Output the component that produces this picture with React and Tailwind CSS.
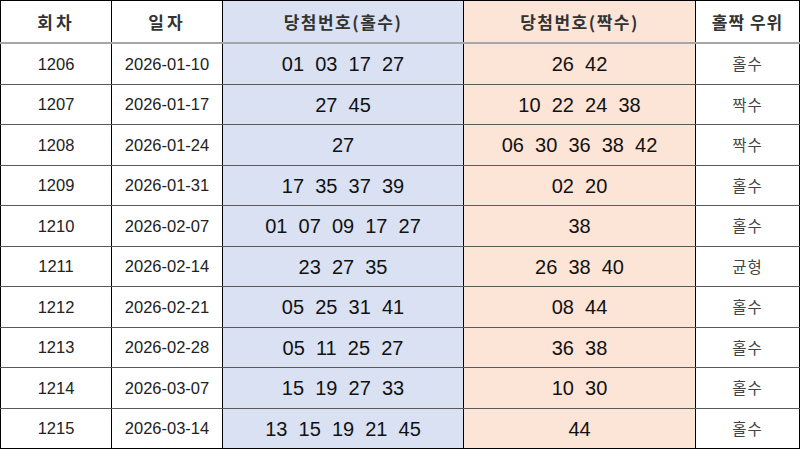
import React from "react";

const rows = [
  ["1206", "2026-01-10", "01  03  17  27", "26  42", "홀수"],
  ["1207", "2026-01-17", "27  45", "10  22  24  38", "짝수"],
  ["1208", "2026-01-24", "27", "06  30  36  38  42", "짝수"],
  ["1209", "2026-01-31", "17  35  37  39", "02  20", "홀수"],
  ["1210", "2026-02-07", "01  07  09  17  27", "38", "홀수"],
  ["1211", "2026-02-14", "23  27  35", "26  38  40", "균형"],
  ["1212", "2026-02-21", "05  25  31  41", "08  44", "홀수"],
  ["1213", "2026-02-28", "05  11  25  27", "36  38", "홀수"],
  ["1214", "2026-03-07", "15  19  27  33", "10  30", "홀수"],
  ["1215", "2026-03-14", "13  15  19  21  45", "44", "홀수"],
];

const head = "flex items-center justify-center border-r border-black text-[17px] font-bold text-[#333] font-['Noto_Sans_CJK_KR','Noto_Sans',sans-serif]";
const cell = "flex items-center justify-center border-r border-black font-['Liberation_Sans','Noto_Sans_CJK_KR',sans-serif]";

export default function App() {
  return (
    <div className="w-[800px] h-[450px] bg-white overflow-hidden text-black">
      <div className="grid grid-cols-[112px_111px_241px_232px_104px] h-[44px] border-t border-black border-b-2 border-b-[#a6a6a6]">
        <div className={head + " border-l tracking-[3px]"}>회차</div>
        <div className={head + " tracking-[3px]"}>일자</div>
        <div className={head + " bg-[#d9e1f2] tracking-[1.5px]"}>당첨번호(홀수)</div>
        <div className={head + " bg-[#fce4d6] tracking-[1.5px]"}>당첨번호(짝수)</div>
        <div className={head + " tracking-[1px]"}>홀짝 우위</div>
      </div>
      {rows.map((r, i) => (
        <div
          key={r[0]}
          className={
            "grid grid-cols-[112px_111px_241px_232px_104px] border-b " +
            (i === rows.length - 1 ? "border-black " : "border-[#595959] ") +
            (i % 2 === 0 ? "h-[41px]" : "h-[40px]")
          }
        >
          <div className={cell + " border-l text-[16.5px] text-[#222]"}>{r[0]}</div>
          <div className={cell + " text-[16.5px] text-[#222]"}>{r[1]}</div>
          <div className={cell + " bg-[#d9e1f2] text-[20px] whitespace-pre text-[#111]"}>{r[2]}</div>
          <div className={cell + " bg-[#fce4d6] text-[20px] whitespace-pre text-[#111]"}>{r[3]}</div>
          <div className="flex items-center justify-center border-r border-black text-[15.5px] text-[#444] tracking-[1px] font-['Noto_Sans_CJK_KR','Noto_Sans',sans-serif]">{r[4]}</div>
        </div>
      ))}
    </div>
  );
}
